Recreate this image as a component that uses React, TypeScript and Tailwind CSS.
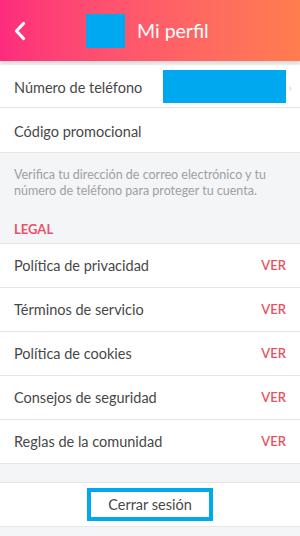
import React from "react";

const legal = [
  "Política de privacidad",
  "Términos de servicio",
  "Política de cookies",
  "Consejos de seguridad",
  "Reglas de la comunidad",
];

export default function App() {
  return (
    <div
      className="w-[300px] h-[536px] overflow-hidden bg-[#f4f5f7] text-[#474747] flex flex-col"
      style={{ fontFamily: "Lato, 'Open Sans', sans-serif" }}
    >
      <div className="relative z-10 h-[61px] shrink-0 flex items-center bg-gradient-to-r from-[#fd2b7c] to-[#ff7d4e] shadow-[0_2px_4px_rgba(0,0,0,0.15)]">
        <svg className="ml-[14px]" width="12" height="20" viewBox="0 0 12 20">
          <path d="M9.5 2.5 L2.5 10 L9.5 17.5" fill="none" stroke="white" strokeWidth="3.2" strokeLinecap="round" strokeLinejoin="round" />
        </svg>
        <div className="ml-[60px] w-[39px] h-[34px] bg-[#00a8f0]" />
        <div className="ml-[12px] text-white text-[19.5px] leading-none">Mi perfil</div>
      </div>

      <div className="mt-[4px] bg-white">
        <div className="h-[43px] flex items-center px-[14px] border-b border-[#e6e6e8] relative">
          <span className="text-[14.5px] mt-[3px]">Número de teléfono</span>
          <div className="ml-auto w-[123px] h-[33px] bg-[#00a8f0]" />
          <span className="absolute right-[8px] top-[14px] text-[#d0d0d0] text-[12px]">›</span>
        </div>
        <div className="h-[45px] flex items-center px-[14px] border-b border-[#e6e6e8]">
          <span className="text-[14.5px] mt-[3px]">Código promocional</span>
        </div>
      </div>

      <div className="px-[14px] pt-[14px] text-[12.5px] leading-[16px] text-[#a0a0a2]">
        Verifica tu dirección de correo electrónico y tu número de teléfono para proteger tu cuenta.
      </div>
      <div className="px-[14px] mt-[22px] mb-[6px] text-[13px] font-bold text-[#e8526a] leading-[16px]">LEGAL</div>

      <div className="bg-white border-t border-[#e6e6e8]">
        {legal.map((t) => (
          <div key={t} className="h-[44px] flex items-center justify-between px-[14px] border-b border-[#e6e6e8]">
            <span className="text-[14.5px] mt-[1px]">{t}</span>
            <span className="text-[13px] text-[#e8525e] font-semibold mt-[1px]">VER</span>
          </div>
        ))}
      </div>

      <div className="mt-[18px] h-[45px] bg-white border-t border-b border-[#e6e6e8] flex items-center justify-center">
        <div className="w-[126px] h-[33px] border-[4px] border-[#00a8f0] flex items-center justify-center text-[14.5px]">
          Cerrar sesión
        </div>
      </div>
    </div>
  );
}
